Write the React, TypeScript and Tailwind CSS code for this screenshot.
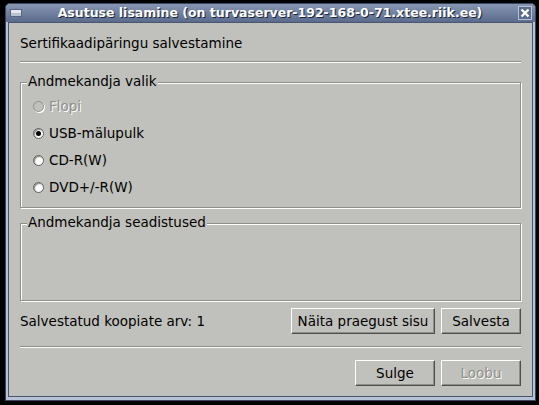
import React from "react";

const font = { fontFamily: '"DejaVu Sans", Verdana, sans-serif' };

function Radio({ label, checked = false, disabled = false }: { label: string; checked?: boolean; disabled?: boolean }) {
  return (
    <div className="flex items-center h-[27px]">
      <span
        className={`ml-[12px] w-[11px] h-[11px] rounded-full border flex items-center justify-center ${
          disabled ? "border-[#8e8f8b] bg-[#c0c1bc] shadow-[1px_1px_0_#ffffff]" : "border-[#5f605c] bg-white shadow-[inset_1px_1px_1px_#8a8b87]"
        }`}
      >
        {checked && <span className="w-[5px] h-[5px] rounded-full bg-black" />}
      </span>
      <span
        className={`ml-[5px] text-[13.5px] ${disabled ? "text-[#8e8f8b] [text-shadow:1px_1px_0_#ffffff]" : "text-black"}`}
      >
        {label}
      </span>
    </div>
  );
}

function Button({ label, width, disabled = false }: { label: string; width: string; disabled?: boolean }) {
  return (
    <div
      className={`${width} h-[26px] flex items-center justify-center text-[13.5px] border border-t-white border-l-white border-b-[#4e4f4b] border-r-[#4e4f4b] shadow-[inset_-1px_-1px_0_#8d8e8a] ${
        disabled ? "text-[#8e8f8b] [text-shadow:1px_1px_0_#ffffff]" : "text-black"
      }`}
    >
      {label}
    </div>
  );
}

function Separator() {
  return <div className="h-[2px] border-t border-t-[#8d8e8a] border-b border-b-white" />;
}

function GroupBox({ title, height, children }: { title: string; height: string; children?: React.ReactNode }) {
  return (
    <div className="relative pt-[7px]">
      <div className={`${height} border border-[#8d8e8a] shadow-[inset_1px_1px_0_#ffffff,1px_1px_0_#ffffff]`}>
        {children}
      </div>
      <span className="absolute left-[7px] top-[-2px] px-[1px] bg-[#c0c1bc] text-[13.5px] leading-[16px] text-black">
        {title}
      </span>
    </div>
  );
}

export default function App() {
  return (
    <div className="w-[539px] h-[405px] bg-black pt-[3px] pl-[5px]" style={font}>
      <div className="w-[531px] h-[398px] flex flex-col rounded-tl-[5px] rounded-tr-[5px] bg-[#b7c2d6] border border-[#3a4660]">
        <div className="h-[18px] flex items-center relative rounded-tl-[4px] rounded-tr-[4px] bg-gradient-to-b from-[#8796b3] to-[#5b6b8c]">
          <div className="ml-[4px] w-[12px] h-[8px] bg-[#e4e7ee] border border-[#5a6784] shadow-[inset_0_-3px_0_#b9c0cf]" />
          <div className="flex-1 text-center text-white font-bold text-[12.5px] leading-[16px] [text-shadow:1px_1px_0_#1d2436]">
            Asutuse lisamine (on turvaserver-192-168-0-71.xtee.riik.ee)
          </div>
          <div className="mr-[3px] w-[14px] h-[14px] bg-[#5c6c8d] border border-[#b7c2d6] flex items-center justify-center">
            <svg width="10" height="10" viewBox="0 0 10 10">
              <path d="M1.5 1.5 L8.5 8.5 M8.5 1.5 L1.5 8.5" stroke="#ffffff" strokeWidth="2.4" />
            </svg>
          </div>
        </div>
        <div className="flex-1 mx-[2px] mb-[3px] bg-[#c0c1bc] border border-[#4a5570] pl-[11px] pr-[11px] pt-[12px] flex flex-col">
          <div className="text-[13.5px] leading-[16px] text-black">Sertifikaadipäringu salvestamine</div>
          <div className="mt-[10px]">
            <Separator />
          </div>
          <div className="mt-[12px]">
            <GroupBox title="Andmekandja valik" height="h-[126px]">
              <div className="pt-[10px]">
                <Radio label="Flopi" disabled />
                <Radio label="USB-mälupulk" checked />
                <Radio label="CD-R(W)" />
                <Radio label="DVD+/-R(W)" />
              </div>
            </GroupBox>
          </div>
          <div className="mt-[8px]">
            <GroupBox title="Andmekandja seadistused" height="h-[78px]" />
          </div>
          <div className="mt-[7px] flex items-center">
            <div className="flex-1 text-[13.5px] text-black">Salvestatud koopiate arv: 1</div>
            <Button label="Näita praegust sisu" width="w-[144px]" />
            <div className="w-[6px]" />
            <Button label="Salvesta" width="w-[80px]" />
          </div>
          <div className="mt-[12px]">
            <Separator />
          </div>
          <div className="mt-[12px] flex justify-end">
            <Button label="Sulge" width="w-[80px]" />
            <div className="w-[6px]" />
            <Button label="Loobu" width="w-[80px]" disabled />
          </div>
        </div>
      </div>
    </div>
  );
}
